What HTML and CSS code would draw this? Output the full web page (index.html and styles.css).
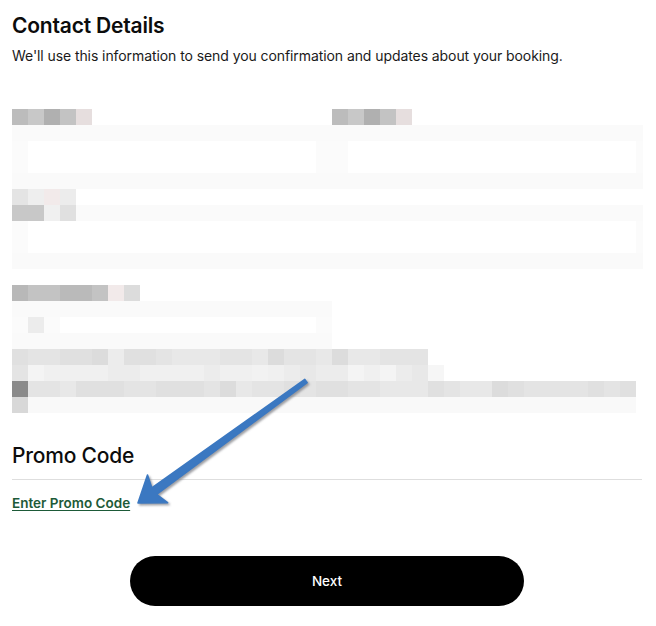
FILE: index.html
```html
<!DOCTYPE html>
<html lang="en">
<head>
<meta charset="utf-8">
<title>Contact Details</title>
<link rel="stylesheet" href="styles.css">
</head>
<body>
<main class="page">
  <section class="contact">
    <h1 class="title">Contact Details</h1>
    <p class="lead">We'll use this information to send you confirmation and updates about your booking.</p>

    <div class="mosaic" aria-hidden="true">
      <div class="mrow">
        <span class="b c2"></span><span class="b c4"></span><span class="b c1"></span><span class="b c3"></span><span class="b pk"></span>
        <span class="gap15"></span>
        <span class="b c2"></span><span class="b c4"></span><span class="b c1"></span><span class="b c3"></span><span class="b pk"></span>
      </div>
      <div class="mrow"><span class="fill full"></span></div>
      <div class="mrow tall">
        <span class="b fa tall"></span><span class="inp w288"></span><span class="fa w32"></span><span class="inp w288"></span><span class="fa w7"></span>
      </div>
      <div class="mrow"><span class="fill full"></span></div>
      <div class="mrow">
        <span class="b e4"></span><span class="b ee"></span><span class="b pk2"></span><span class="b ec"></span>
      </div>
      <div class="mrow">
        <span class="b c4"></span><span class="b c4"></span><span class="b f0"></span><span class="b e0"></span><span class="fill w567"></span>
      </div>
      <div class="mrow tall">
        <span class="b fa tall"></span><span class="inp w608"></span><span class="fa w7"></span>
      </div>
      <div class="mrow"><span class="fill full"></span></div>
      <div class="mrow"></div>
      <div class="mrow">
        <span class="b b8"></span><span class="b c3"></span><span class="b c3"></span><span class="b ba"></span><span class="b ba"></span><span class="b c3"></span><span class="b pk2"></span><span class="b dc"></span>
      </div>
      <div class="mrow"><span class="fill w320"></span></div>
      <div class="mrow">
        <span class="b fa"></span><span class="b ec"></span><span class="b fa"></span><span class="inp w256"></span><span class="b fa"></span>
      </div>
      <div class="mrow"><span class="fill w320"></span></div>
      <div class="mrow">
        <span class="b e0"></span><span class="b e4"></span><span class="b e4"></span><span class="b e0"></span><span class="b e0"></span><span class="b dc"></span><span class="b ec"></span><span class="b e0"></span><span class="b e0"></span><span class="b e4"></span><span class="b e8"></span><span class="b e8"></span><span class="b e8"></span><span class="b e4"></span><span class="b e4"></span><span class="b e8"></span><span class="b dc"></span><span class="b e4"></span><span class="b e4"></span><span class="b e8"></span><span class="b dc"></span><span class="b e8"></span><span class="b e8"></span><span class="b e4"></span><span class="b e4"></span><span class="b e4"></span>
      </div>
      <div class="mrow">
        <span class="b e4"></span><span class="b f4"></span><span class="b f0"></span><span class="b f0"></span><span class="b f0"></span><span class="b f0"></span><span class="b ec"></span><span class="b ec"></span><span class="b f0"></span><span class="b f0"></span><span class="b f0"></span><span class="b f0"></span><span class="b ec"></span><span class="b f0"></span><span class="b f0"></span><span class="b f2"></span><span class="b f0"></span><span class="b ec"></span><span class="b e8"></span><span class="b ec"></span><span class="b ec"></span><span class="b f4"></span><span class="b f0"></span><span class="b f4"></span><span class="b ec"></span><span class="b e8"></span><span class="b f6"></span>
      </div>
      <div class="mrow">
        <span class="b d8a"></span><span class="b e4"></span><span class="b e4"></span><span class="b e8"></span><span class="b e0"></span><span class="b e0"></span><span class="b e0"></span><span class="b e4"></span><span class="b e4"></span><span class="b e0"></span><span class="b e0"></span><span class="b e0"></span><span class="b e4"></span><span class="b dc"></span><span class="b e8"></span><span class="b e4"></span><span class="b e4"></span><span class="b e0"></span><span class="b e4"></span><span class="b e0"></span><span class="b e0"></span><span class="b e4"></span><span class="b e4"></span><span class="b e8"></span><span class="b e8"></span><span class="b e8"></span><span class="b e0"></span><span class="b e4"></span><span class="b e8"></span><span class="b e8"></span><span class="b dc"></span><span class="b e0"></span><span class="b e4"></span><span class="b e4"></span><span class="b e4"></span><span class="b e4"></span><span class="b e0"></span><span class="b e4"></span><span class="b e0"></span>
      </div>
      <div class="mrow">
        <span class="b d8"></span><span class="fill2 w608"></span>
      </div>
    </div>
  </section>

  <section class="promo">
    <h2 class="promo-title">Promo Code</h2>
    <a class="promo-link" href="#">Enter Promo Code</a>
  </section>

  <div class="actions">
    <button class="next" type="button">Next</button>
  </div>

  <svg class="arrow" width="656" height="626" viewBox="0 0 656 626" aria-hidden="true">
    <defs>
      <filter id="soft" x="-10%" y="-10%" width="120%" height="120%">
        <feGaussianBlur stdDeviation="1"/>
      </filter>
    </defs>
    <g transform="translate(1.6 1.8)" filter="url(#soft)">
      <polygon points="307.1,382.6 156.6,494.4 167.5,502.7 138,503 147.5,475.1 151.8,488 304.8,379.4" fill="#7d7f86" stroke="#7d7f86" stroke-width="1.6" stroke-linejoin="round" opacity="0.75"/>
    </g>
    <polygon points="307.1,382.6 156.6,494.4 167.5,502.7 138,503 147.5,475.1 151.8,488 304.8,379.4" fill="#3b78c1" stroke="#3b78c1" stroke-width="1.6" stroke-linejoin="round"/>
  </svg>
</main>
</body>
</html>
```

FILE: styles.css
```css
* { box-sizing: border-box; }

html, body {
  margin: 0;
  padding: 0;
  background: #ffffff;
}

body {
  font-family: "Inter", "Noto Sans", "Liberation Sans", sans-serif;
  color: #111111;
}

.page {
  position: relative;
  width: 656px;
  height: 626px;
  padding: 0 12px;
  overflow: hidden;
}

.title {
  margin: 0;
  padding-top: 12px;
  font-size: 21px;
  line-height: 28px;
  font-weight: 600;
  letter-spacing: -0.2px;
  color: #0c0c0c;
}

.lead {
  margin: 7px 0 0;
  font-size: 14px;
  line-height: 18px;
  font-weight: 400;
  color: #1a1a1a;
  letter-spacing: -0.08px;
}

.mosaic {
  margin-top: 44px;
  display: flex;
  flex-direction: column;
}

.mrow {
  display: flex;
  height: 16px;
}

.mrow.tall { height: 32px; }

.b { width: 16px; height: 16px; flex: none; }
.b.tall { height: 32px; }

.gap15 { width: 240px; flex: none; }
.fill { height: 16px; background: #fafafa; flex: none; }
.fill2 { height: 16px; background: #f9f9f9; flex: none; }
.full { width: 631px; }
.inp { background: #ffffff; flex: none; }
.fa { background: #fbfbfb; flex: none; }
.w7 { width: 7px; }
.w32 { width: 32px; }
.w256 { width: 256px; }
.w288 { width: 288px; }
.w320 { width: 320px; }
.w567 { width: 567px; }
.w608 { width: 608px; }

.c1 { background: #b0b0b0; }
.c2 { background: #bcbcbc; }
.c3 { background: #c3c3c3; }
.c4 { background: #c8c8c8; }
.b8 { background: #b8b8b8; }
.ba { background: #bababa; }
.pk { background: #e6dede; }
.pk2 { background: #f2eaea; }
.d8a { background: #8a8a8a; }
.d8 { background: #d8d8d8; }
.dc { background: #dcdcdc; }
.e0 { background: #e0e0e0; }
.e4 { background: #e4e4e4; }
.e8 { background: #e8e8e8; }
.ec { background: #ececec; }
.ee { background: #eeeeee; }
.f0 { background: #f0f0f0; }
.f2 { background: #f2f2f2; }
.f4 { background: #f4f4f4; }
.f6 { background: #f6f6f6; }

.promo {
  margin-top: 29px;
}

.promo-title {
  margin: 0;
  padding-bottom: 9px;
  font-size: 21px;
  line-height: 28px;
  font-weight: 500;
  letter-spacing: -0.2px;
  color: #0c0c0c;
  border-bottom: 1px solid #dedede;
  width: 630px;
}

.promo-link {
  display: inline-block;
  margin-top: 14px;
  font-size: 13.5px;
  line-height: 18px;
  font-weight: 600;
  color: #1d5a38;
  text-decoration: underline;
  text-underline-offset: 2px;
}

.actions {
  display: flex;
  justify-content: center;
  margin-top: 44px;
}

.next {
  width: 394px;
  height: 50px;
  border: none;
  border-radius: 25px;
  background: #000000;
  color: #ffffff;
  font-family: "Inter", "Noto Sans", "Liberation Sans", sans-serif;
  font-size: 13.5px;
  font-weight: 500;
  margin-left: -2px;
}

.arrow {
  position: absolute;
  left: 0;
  top: 0;
  pointer-events: none;
}
```
